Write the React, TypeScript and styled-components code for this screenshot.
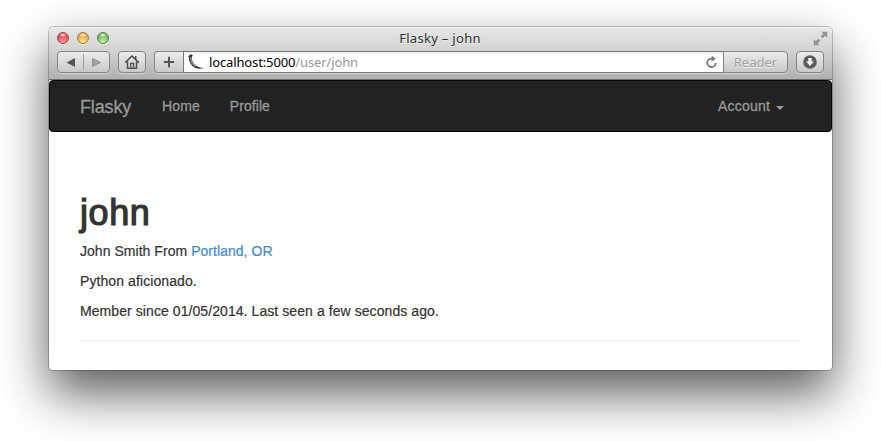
import React from "react";
import styled, { createGlobalStyle } from "styled-components";

const GlobalStyle = createGlobalStyle`
  *, *::before, *::after { box-sizing: border-box; }
  html, body { margin: 0; background: #fff; overflow: hidden; }
`;

const Desktop = styled.main`
  width: 881px;
  height: 441px;
  padding: 27px 0 0 49px;
  overflow: hidden;
  font-family: "Liberation Sans", Helvetica, Arial, sans-serif;
`;

const BrowserWindow = styled.section`
  width: 783px;
  height: 343px;
  display: flex;
  flex-direction: column;
  border-radius: 5px 5px 4px 4px;
  background: #fff;
  box-shadow: 0 0 0 1px rgba(0, 0, 0, 0.22), 0 23px 50px rgba(0, 0, 0, 0.65);
`;

const Chrome = styled.header`
  height: 53px;
  flex: none;
  border-radius: 5px 5px 0 0;
  border-bottom: 1px solid #6c6c6c;
  background: linear-gradient(#e8e8e8, #d2d2d2 46%, #b0b0b0);
  box-shadow: inset 0 1px #f0f0f0;
  font-family: "Noto Sans", "Open Sans", sans-serif;
`;

const TitleBar = styled.div`
  height: 24px;
  display: grid;
  grid-template-columns: 100px 1fr 100px;
  align-items: center;
  padding: 0 4px 2px 8px;
`;

const Lights = styled.div`
  display: flex;
  gap: 8px;
`;

const Light = styled.i<{ $rim: string; $base: string; $glow: string }>`
  width: 12px;
  height: 12px;
  border-radius: 50%;
  border: 1px solid ${(p) => p.$rim};
  background: radial-gradient(ellipse 4px 2px at 50% 20%, #fff, transparent),
    radial-gradient(circle at 50% 90%, ${(p) => p.$glow}, ${(p) => p.$base} 75%);
  box-shadow: 0 1px rgba(255, 255, 255, 0.5);
`;

const WindowTitle = styled.span`
  margin-left: -5px;
  text-align: center;
  font-size: 13px;
  line-height: 22px;
  letter-spacing: 0.3px;
  color: #303030;
  white-space: nowrap;
  text-shadow: 0 1px rgba(255, 255, 255, 0.6);
`;

const ExpandIcon = styled.svg`
  justify-self: end;
  display: block;
`;

const Toolbar = styled.div`
  display: flex;
  height: 22px;
  padding: 0 8px;
`;

const ToolButton = styled.button<{ $width: number; $gap?: number; $join?: "left" | "right" }>`
  width: ${(p) => p.$width}px;
  height: 22px;
  margin: 0 ${(p) => p.$gap ?? 0}px 0 0;
  padding: 0;
  display: flex;
  align-items: center;
  justify-content: center;
  border: 1px solid #858585;
  border-radius: ${(p) =>
    p.$join === "right" ? "4px 0 0 4px" : p.$join === "left" ? "0 4px 4px 0" : "4px"};
  ${(p) => (p.$join === "right" ? "border-right-width: 0;" : "")}
  background: linear-gradient(#ececec, #c9c9c9);
  box-shadow: 0 1px rgba(255, 255, 255, 0.4);
  color: #a2a2a2;
  font: 13px "Noto Sans", sans-serif;
  text-shadow: 0 1px rgba(255, 255, 255, 0.7);
`;

const AddressBar = styled.div`
  width: 540px;
  height: 22px;
  display: flex;
  align-items: center;
  padding: 0 5px 0 4px;
  border: 1px solid #777;
  border-right-width: 0;
  background: linear-gradient(#eee, #fff 4px);
  box-shadow: 0 1px rgba(255, 255, 255, 0.4);
`;

const Address = styled.span`
  flex: 1;
  padding-left: 4px;
  font-size: 13px;
  line-height: 20px;
  letter-spacing: -0.13px;
  color: #999;
`;

const Host = styled.span`
  color: #000;
`;

const Navbar = styled.nav`
  height: 52px;
  flex: none;
  display: flex;
  align-items: center;
  padding: 0 47px 0 30px;
  border: 1px solid #080808;
  border-radius: 4px;
  background: #222;
`;

const NavLink = styled.a<{ $size: number; $gap?: number; $spacing?: number }>`
  margin-right: ${(p) => p.$gap ?? 0}px;
  font-size: ${(p) => p.$size}px;
  line-height: 20px;
  letter-spacing: ${(p) => p.$spacing ?? 0}px;
  color: #999;
  -webkit-text-stroke: 0.3px #999;
`;

const Brand = styled(NavLink)`
  padding-top: 2px;
`;

const AccountMenu = styled.div`
  margin-left: auto;
  display: flex;
  align-items: center;
`;

const Caret = styled.i`
  margin: 3px 0 0 6px;
  border: 4px solid transparent;
  border-top-color: #999;
  border-bottom: 0;
`;

const Profile = styled.article`
  padding: 61px 32px 0 31px;
  color: #333;
`;

const Username = styled.h1`
  margin: 0 0 8px;
  font-size: 36px;
  line-height: 40px;
  font-weight: 500;
  letter-spacing: 0.6px;
  -webkit-text-stroke: 1.2px #333;
`;

const Line = styled.p<{ $spacing: number }>`
  margin: 0 0 10px;
  font-size: 14px;
  line-height: 20px;
  letter-spacing: ${(p) => p.$spacing}px;
  white-space: nowrap;
  -webkit-text-stroke: 0.2px currentColor;
`;

const PlaceLink = styled.a`
  color: #428bca;
  -webkit-text-stroke-color: #428bca;
`;

const Rule = styled.hr`
  margin: 19px 0 0;
  border: 0;
  border-top: 1px solid #eee;
`;

const HistoryArrows = () => (
  <svg width="51" height="20" viewBox="0 0 51 20">
    <path d="M17 6V15L8.5 10.5Z" fill="#555" />
    <path d="M25.5 2V18" stroke="#a0a0a0" />
    <path d="M34.5 6.5V14.5L42.5 10.5Z" fill="#a4a4a4" stroke="#858585" strokeWidth=".8" />
  </svg>
);

const HomeIcon = () => (
  <svg width="16" height="16" viewBox="0 0 16 16" fill="none" stroke="#4c4c4c" strokeWidth="1.5">
    <path d="M1.2 8.6L8 2L14.8 8.6M3.5 7.7V14.2H12.5V7.7M11.7 5.2V2" />
    <path d="M6.7 13.5V9.3H9.5V13.5" strokeWidth="1.3" />
  </svg>
);

const PlusIcon = () => (
  <svg width="12" height="12" viewBox="0 0 12 12">
    <path d="M6 .8V11.2M.8 6H11.2" stroke="#555" strokeWidth="2" />
  </svg>
);

const FlaskHorn = () => (
  <svg width="17" height="16" viewBox="0 0 17 16">
    <path d="M1 1.5L3.2.3L4.8 1.2L3.9 2.8C3.3 6.6 6 11.2 10.4 12.9C12.4 13.7 14.3 14 16 13.9C11.4 15.6 6.8 14.4 4 11.4C1.6 8.8.3 5.4 1 3.3L.2 2.6Z" fill="#333" />
    <path d="M2.8 3.6C2.7 7.2 4.6 10.6 8 12.5" fill="none" stroke="#aaa" strokeWidth="1.1" />
    <path d="M1.1 4.9L3 4.3M1.8 7.5L3.7 6.7M3.2 10L5 8.9" stroke="#777" strokeWidth=".6" />
  </svg>
);

const ReloadIcon = () => (
  <svg width="13" height="14" viewBox="0 0 13 14">
    <path d="M10.7 8A4.2 4.2 0 1 1 6.5 3.6H8" fill="none" stroke="#777" strokeWidth="1.8" />
    <path d="M6.6.7V6.6L10.9 3.8Z" fill="#777" />
  </svg>
);

const DownloadIcon = () => (
  <svg width="14" height="14" viewBox="0 0 14 14">
    <circle cx="7" cy="7" r="6.8" fill="#5c5c5c" />
    <path d="M5.3 3H8.7V6.5H11L7 11L3 6.5H5.3Z" fill="#f2f2f2" />
  </svg>
);

export default function App() {
  return (
    <>
      <GlobalStyle />
      <Desktop>
        <BrowserWindow>
          <Chrome>
            <TitleBar>
              <Lights>
                <Light $rim="#a54444" $base="#d94249" $glow="#ff9b9b" />
                <Light $rim="#a77936" $base="#e29b3c" $glow="#ffe994" />
                <Light $rim="#4d8843" $base="#69b05a" $glow="#cff5a5" />
              </Lights>
              <WindowTitle>Flasky – john</WindowTitle>
              <ExpandIcon width="15" height="15" viewBox="0 0 15 15">
                <path d="M8.3.8H14.2V6.7L12.2 4.7L9.6 7.3L7.7 5.4L10.3 2.8ZM6.7 14.2H.8V8.3L2.8 10.3L5.4 7.7L7.3 9.6L4.7 12.2Z" fill="#929292" />
              </ExpandIcon>
            </TitleBar>
            <Toolbar>
              <ToolButton $width={53} $gap={8} aria-label="History"><HistoryArrows /></ToolButton>
              <ToolButton $width={28} $gap={8} aria-label="Home"><HomeIcon /></ToolButton>
              <ToolButton $width={29} $join="right" aria-label="Add bookmark"><PlusIcon /></ToolButton>
              <AddressBar>
                <FlaskHorn />
                <Address><Host>localhost:5000</Host>/user/john</Address>
                <ReloadIcon />
              </AddressBar>
              <ToolButton $width={65} $gap={8} $join="left">Reader</ToolButton>
              <ToolButton $width={28} aria-label="Downloads"><DownloadIcon /></ToolButton>
            </Toolbar>
          </Chrome>
          <Navbar>
            <Brand $size={18} $gap={31} $spacing={-0.15}>Flasky</Brand>
            <NavLink $size={14} $gap={30} $spacing={0.1}>Home</NavLink>
            <NavLink $size={14} $spacing={0.05}>Profile</NavLink>
            <AccountMenu>
              <NavLink $size={14} $spacing={0.2}>Account</NavLink>
              <Caret />
            </AccountMenu>
          </Navbar>
          <Profile>
            <Username>john</Username>
            <Line $spacing={0.04}>John Smith From <PlaceLink>Portland, OR</PlaceLink></Line>
            <Line $spacing={0.09}>Python aficionado.</Line>
            <Line $spacing={0.075}>Member since 01/05/2014. Last seen a few seconds ago.</Line>
            <Rule />
          </Profile>
        </BrowserWindow>
      </Desktop>
    </>
  );
}
